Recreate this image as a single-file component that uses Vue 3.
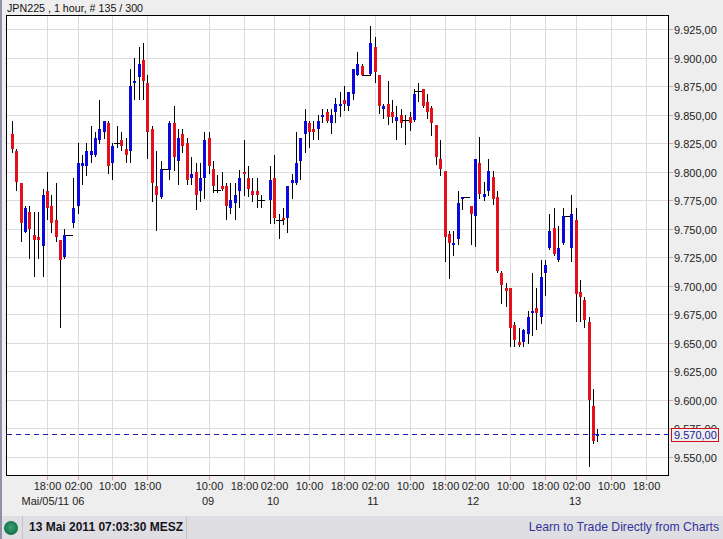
<script setup>
const hLines = [29, 58, 86, 115, 143, 172, 200, 229, 257, 286, 314, 343, 371, 400, 428, 457]
const prices = ['9.925,00', '9.900,00', '9.875,00', '9.850,00', '9.825,00', '9.800,00', '9.775,00', '9.750,00', '9.725,00', '9.700,00', '9.675,00', '9.650,00', '9.625,00', '9.600,00', '9.575,00', '9.550,00']
const yTicks = hLines.map((y, i) => ({ y, label: prices[i] }))
const xTicks = [
  [47, '18:00'], [78, '02:00'], [112, '10:00'], [147, '18:00'], [209, '10:00'], [244, '18:00'],
  [274, '02:00'], [309, '10:00'], [344, '18:00'], [375, '02:00'], [410, '10:00'], [445, '18:00'],
  [475, '02:00'], [510, '10:00'], [545, '18:00'], [576, '02:00'], [611, '10:00'], [646, '18:00']
].map(([x, label]) => ({ x, label }))
const days = [[53, 'Mai/05/11 06'], [208, '09'], [273, '10'], [373, '11'], [473, '12'], [575, '13']].map(([x, label]) => ({ x, label }))

// x, high, low, body top, body bottom, kind
const raw = [
  [12, 121, 152, 134, 149, 'r'], [16, 149, 190, 151, 182, 'r'], [21, 183, 241, 183, 223, 'r'], [25, 206, 232, 208, 232, 'b'],
  [29, 206, 258, 212, 229, 'r'], [34, 212, 276, 235, 240, 'r'], [38, 212, 258, 237, 240, 'r'], [43, 189, 276, 195, 246, 'b'],
  [47, 172, 219, 191, 208, 'r'], [51, 195, 232, 206, 223, 'r'], [56, 183, 241, 220, 237, 'r'], [60, 240, 327, 240, 260, 'r'],
  [64, 229, 258, 235, 257, 'b'], [69, 235, 235, 235, 235, 'd'], [73, 178, 227, 208, 223, 'b'], [78, 143, 213, 163, 206, 'b'],
  [82, 155, 184, 163, 166, 'b'], [86, 143, 175, 151, 166, 'b'], [91, 126, 162, 151, 155, 'b'], [95, 132, 156, 138, 155, 'b'],
  [99, 100, 143, 129, 140, 'b'], [104, 121, 138, 121, 132, 'b'], [108, 121, 173, 123, 166, 'r'], [112, 143, 179, 146, 163, 'b'],
  [117, 126, 147, 143, 143, 'd'], [121, 132, 150, 140, 146, 'r'], [126, 138, 162, 149, 155, 'r'], [130, 69, 162, 86, 151, 'b'],
  [134, 58, 99, 81, 83, 'b'], [139, 47, 99, 64, 77, 'b'], [143, 43, 99, 60, 81, 'r'], [147, 75, 158, 83, 132, 'r'],
  [152, 126, 201, 129, 183, 'r'], [156, 151, 230, 186, 195, 'r'], [161, 161, 198, 169, 197, 'b'], [165, 169, 169, 169, 169, 'd'],
  [169, 121, 179, 123, 170, 'b'], [174, 106, 170, 123, 157, 'r'], [178, 129, 184, 138, 161, 'b'], [182, 129, 152, 134, 146, 'r'],
  [187, 138, 184, 143, 180, 'r'], [191, 157, 184, 174, 178, 'b'], [196, 163, 209, 172, 195, 'r'], [200, 163, 201, 178, 191, 'b'],
  [204, 132, 198, 140, 178, 'b'], [209, 132, 173, 138, 166, 'r'], [213, 161, 192, 169, 186, 'r'], [217, 175, 192, 190, 190, 'd'],
  [222, 172, 190, 186, 189, 'r'], [226, 183, 219, 186, 206, 'r'], [230, 183, 213, 200, 208, 'b'], [235, 183, 219, 195, 203, 'b'],
  [239, 170, 207, 178, 191, 'b'], [244, 140, 195, 172, 174, 'r'], [248, 166, 196, 178, 189, 'r'], [252, 178, 201, 191, 195, 'r'],
  [257, 178, 207, 191, 195, 'r'], [261, 195, 207, 200, 200, 'd'], [270, 166, 223, 180, 200, 'b'], [274, 155, 223, 178, 218, 'r'],
  [279, 214, 238, 220, 220, 'd'], [283, 208, 224, 218, 220, 'r'], [287, 186, 232, 186, 218, 'b'], [292, 174, 198, 180, 183, 'b'],
  [296, 132, 184, 163, 183, 'b'], [300, 138, 179, 138, 161, 'b'], [305, 109, 152, 121, 134, 'b'], [309, 121, 147, 123, 132, 'r'],
  [313, 121, 139, 129, 132, 'r'], [318, 115, 139, 121, 129, 'b'], [322, 109, 122, 115, 117, 'b'], [327, 109, 122, 112, 121, 'r'],
  [331, 109, 133, 115, 123, 'b'], [335, 98, 122, 104, 112, 'b'], [340, 92, 116, 104, 106, 'b'], [344, 86, 110, 100, 104, 'r'],
  [348, 92, 110, 92, 106, 'b'], [353, 69, 99, 69, 94, 'b'], [357, 52, 75, 64, 75, 'b'], [362, 64, 75, 66, 75, 'r'],
  [366, 75, 75, 75, 75, 'd'], [370, 26, 75, 43, 74, 'b'], [375, 37, 82, 47, 72, 'r'], [379, 75, 113, 75, 106, 'r'],
  [383, 104, 118, 106, 109, 'b'], [388, 81, 124, 104, 117, 'r'], [392, 100, 122, 112, 117, 'r'], [396, 106, 139, 117, 121, 'b'],
  [401, 109, 127, 115, 123, 'r'], [405, 115, 144, 120, 120, 'd'], [410, 112, 130, 117, 123, 'r'], [414, 89, 121, 94, 120, 'b'],
  [418, 83, 101, 91, 91, 'd'], [423, 89, 107, 89, 106, 'r'], [427, 94, 118, 102, 112, 'r'], [431, 106, 135, 108, 123, 'r'],
  [436, 125, 164, 125, 157, 'r'], [440, 140, 175, 159, 169, 'r'], [445, 171, 261, 171, 237, 'r'], [449, 231, 278, 234, 243, 'r'],
  [453, 231, 255, 243, 245, 'b'], [458, 191, 244, 203, 239, 'b'], [462, 197, 209, 197, 199, 'b'], [466, 197, 197, 197, 197, 'd'],
  [471, 206, 244, 206, 214, 'r'], [475, 159, 246, 159, 216, 'b'], [479, 137, 198, 163, 194, 'r'], [484, 182, 200, 194, 197, 'b'],
  [488, 159, 195, 171, 191, 'b'], [493, 171, 204, 177, 199, 'r'], [497, 191, 272, 197, 271, 'r'], [501, 271, 303, 273, 285, 'r'],
  [506, 283, 306, 288, 291, 'r'], [510, 288, 346, 288, 328, 'r'], [514, 322, 346, 325, 340, 'r'], [519, 328, 346, 342, 345, 'r'],
  [523, 329, 346, 330, 342, 'b'], [528, 311, 343, 317, 334, 'b'], [532, 273, 335, 311, 313, 'b'], [536, 288, 329, 308, 313, 'r'],
  [541, 260, 323, 277, 317, 'b'], [545, 260, 295, 265, 273, 'b'], [549, 214, 249, 231, 248, 'b'], [554, 208, 255, 228, 254, 'r'],
  [558, 226, 261, 248, 260, 'b'], [563, 208, 244, 216, 243, 'b'], [567, 216, 216, 216, 216, 'd'], [571, 195, 261, 214, 248, 'b'],
  [576, 208, 321, 220, 294, 'r'], [580, 280, 321, 292, 297, 'r'], [584, 297, 327, 300, 320, 'r'], [589, 317, 466, 322, 400, 'r'],
  [593, 389, 443, 406, 441, 'r'], [597, 429, 441, 434, 436, 'b']
]
const candles = raw.map(([x, hi, lo, top, bot, kind]) => ({ x, hi, lo, top, bot, kind }))
</script>

<template>
  <div class="page">
    <div class="title">JPN225 , 1 hour, # 135 / 300</div>
    <svg class="chart" width="721" height="501" viewBox="2 15 721 501">
      <rect class="plot" x="7" y="16" width="661" height="459" />
      <g v-for="t in yTicks" :key="'h' + t.y">
        <rect class="grid" x="7" :y="t.y" width="661" height="1" />
        <rect class="tick" x="669" :y="t.y" width="4" height="1" />
        <text class="label" x="674" :y="t.y + 5">{{ t.label }}</text>
      </g>
      <g v-for="t in xTicks" :key="'v' + t.x">
        <rect class="grid" :x="t.x" y="16" width="1" height="459" />
        <rect class="tick" :x="t.x" y="476" width="1" height="4" />
        <text class="label mid" :x="t.x + 0.5" y="490">{{ t.label }}</text>
      </g>
      <text v-for="d in days" :key="d.label" class="label mid" :x="d.x" y="505">{{ d.label }}</text>

      <g v-for="c in candles" :key="c.x">
        <rect class="wick" :x="c.x" :y="c.hi" width="1" :height="c.lo - c.hi + 1" />
        <rect v-if="c.kind === 'd'" class="wick" :x="c.x - 3" :y="c.top" width="7" height="1" />
        <rect v-else :class="c.kind === 'r' ? 'down' : 'up'" :x="c.x - 1" :y="c.top" width="3" :height="c.bot - c.top" />
      </g>

      <rect class="frame" x="6.5" y="15.5" width="662" height="460" />
      <line class="last" x1="7" y1="434.5" x2="671" y2="434.5" />
      <rect class="last-box" x="671.5" y="428.5" width="47" height="13" />
      <text class="label last-text" x="674" y="439">9.570,00</text>
    </svg>
    <div class="status">
      <div class="led-cell"><span class="led"></span></div>
      <div class="clock">13 Mai 2011 07:03:30 MESZ</div>
      <div class="promo">Learn to Trade Directly from Charts</div>
    </div>
  </div>
</template>

<style>
html, body { margin: 0; background: #eeeeee; }
</style>

<style scoped>
.page {
  width: 721px;
  height: 539px;
  display: flex;
  flex-direction: column;
  background: #eeeeee;
  border-left: 2px solid #8f8fa8;
  font-family: "Liberation Sans", Arial, sans-serif;
  overflow: hidden;
}
.title {
  height: 15px;
  padding-left: 5px;
  font-size: 10.7px;
  line-height: 16px;
  color: #111;
  white-space: nowrap;
}
.chart { display: block; shape-rendering: crispEdges; }
.plot { fill: #fff; }
.grid { fill: #dcdcdc; }
.tick { fill: #d9a0a0; }
.label { font-size: 11px; fill: #1c1c1c; shape-rendering: auto; }
.mid { text-anchor: middle; }
.wick { fill: #000; }
.down { fill: #e3121a; }
.up { fill: #0a0adc; }
.frame { fill: none; stroke: #000; stroke-width: 1; }
.last { stroke: #1a1ab4; stroke-width: 1; stroke-dasharray: 5 4; }
.last-box { fill: #eeeeee; stroke: #d01018; stroke-width: 1; }
.last-text { fill: #1a1a9a; }
.status {
  flex: 1;
  display: flex;
  align-items: stretch;
  background: #dfdfe3;
}
.led-cell {
  width: 18px;
  flex: none;
  display: flex;
  align-items: center;
  padding-left: 2px;
  border-right: 1px solid #c4c4c8;
}
.led {
  width: 14px;
  height: 14px;
  border-radius: 50%;
  background: radial-gradient(circle at 50% 45%, #3fa277, #17784f 60%, #0e5a3a);
}
.clock {
  width: 157px;
  flex: none;
  padding-left: 6px;
  border-right: 1px solid #c4c4c8;
  font-size: 12px;
  font-weight: 700;
  line-height: 23px;
  color: #141420;
  white-space: nowrap;
}
.promo {
  flex: 1;
  text-align: right;
  padding-right: 4px;
  font-size: 12.2px;
  line-height: 23px;
  color: #33339a;
  white-space: nowrap;
}
</style>
